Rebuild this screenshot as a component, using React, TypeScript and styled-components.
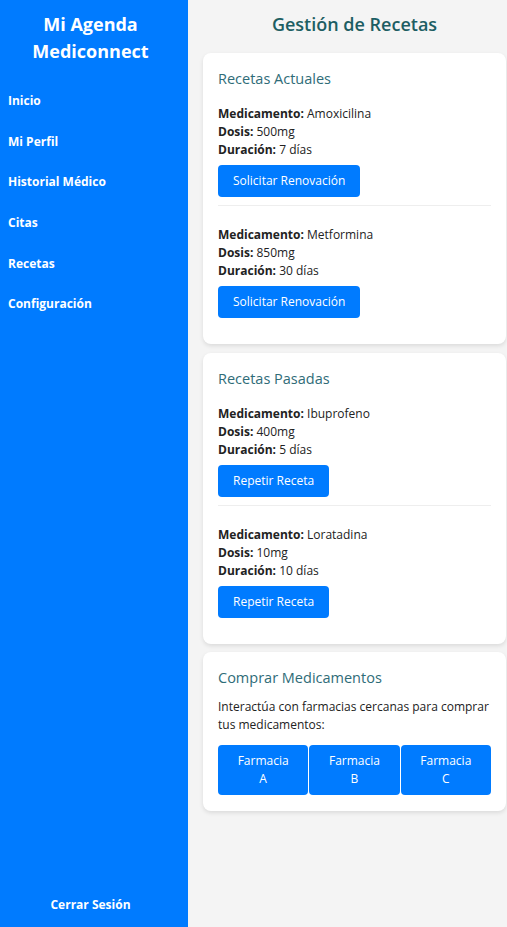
import React from "react";
import styled, { createGlobalStyle } from "styled-components";

const GlobalStyle = createGlobalStyle`
  html, body { margin: 0; padding: 0; }
  body {
    font-family: "Open Sans", "Noto Sans", "Liberation Sans", sans-serif;
    background: #f4f4f4;
    color: #222;
  }
  * { box-sizing: border-box; }
`;

const Layout = styled.div`
  display: flex;
  min-height: 100vh;
`;

const Sidebar = styled.aside`
  width: 188px;
  flex: 0 0 188px;
  height: 100vh;
  background: #007bff;
  color: #fff;
  display: flex;
  flex-direction: column;
  padding: 11px 15px 13px 8px;
`;

const Brand = styled.h2`
  margin: 0 0 16px;
  font-size: 18px;
  line-height: 27px;
  font-weight: 700;
  text-align: center;
`;

const Nav = styled.nav`
  display: flex;
  flex-direction: column;
`;

const NavLink = styled.a`
  display: block;
  color: #fff;
  text-decoration: none;
  font-size: 12px;
  font-weight: 700;
  line-height: 18px;
  padding: 11.3px 0;
`;

const Logout = styled.a`
  margin-top: auto;
  display: block;
  text-align: center;
  color: #fff;
  text-decoration: none;
  font-size: 12px;
  font-weight: 700;
  line-height: 18px;
`;

const Main = styled.main`
  flex: 1;
  padding: 11px 1px 20px 15px;
  display: flex;
  flex-direction: column;
  gap: 8.5px;
`;

const PageTitle = styled.h1`
  margin: 0 0 7.5px;
  text-align: center;
  font-size: 18px;
  line-height: 26px;
  font-weight: 600;
  color: #1d5e63;
`;

const Card = styled.section<{ $padBottom?: number }>`
  background: #fff;
  border-radius: 8px;
  box-shadow: 0 2px 4px rgba(0, 0, 0, 0.1);
  padding: 16px 15px ${(p) => p.$padBottom ?? 15}px;
`;

const CardTitle = styled.h3`
  margin: 0 0 10px;
  font-size: 14.5px;
  line-height: 20px;
  font-weight: 400;
  color: #2f6c78;
`;

const Item = styled.div`
  padding: 6px 0 8px;
  border-bottom: 1px solid #eee;
  & + & {
    margin-top: 14px;
  }
  &:last-child {
    border-bottom: none;
    padding-bottom: 11px;
  }
`;

const Field = styled.p`
  margin: 0;
  font-size: 12px;
  line-height: 18px;
  color: #222;
  b {
    font-weight: 700;
  }
`;

const Button = styled.button`
  margin-top: 6px;
  background: #007bff;
  color: #fff;
  border: none;
  border-radius: 4px;
  font-family: inherit;
  font-size: 12px;
  line-height: 18px;
  padding: 7px 15px;
  cursor: pointer;
`;

const Text = styled.p`
  margin: 0;
  font-size: 12px;
  line-height: 18px;
  color: #222;
`;

const PharmacyRow = styled.div`
  display: flex;
  gap: 1px;
  margin-top: 11px;
`;

const PharmacyButton = styled(Button)`
  margin-top: 0;
  flex: 1;
  padding: 7px 18px;
`;

type Recipe = { med: string; dose: string; duration: string };

const current: Recipe[] = [
  { med: "Amoxicilina", dose: "500mg", duration: "7 días" },
  { med: "Metformina", dose: "850mg", duration: "30 días" },
];
const past: Recipe[] = [
  { med: "Ibuprofeno", dose: "400mg", duration: "5 días" },
  { med: "Loratadina", dose: "10mg", duration: "10 días" },
];

function RecipeCard({ title, items, action }: { title: string; items: Recipe[]; action: string }) {
  return (
    <Card>
      <CardTitle>{title}</CardTitle>
      {items.map((r) => (
        <Item key={r.med}>
          <Field>
            <b>Medicamento:</b> {r.med}
          </Field>
          <Field>
            <b>Dosis:</b> {r.dose}
          </Field>
          <Field>
            <b>Duración:</b> {r.duration}
          </Field>
          <Button>{action}</Button>
        </Item>
      ))}
    </Card>
  );
}

export default function App() {
  return (
    <>
      <GlobalStyle />
      <Layout>
        <Sidebar>
          <Brand>Mi Agenda Mediconnect</Brand>
          <Nav>
            {["Inicio", "Mi Perfil", "Historial Médico", "Citas", "Recetas", "Configuración"].map((l) => (
              <NavLink key={l} href="#">
                {l}
              </NavLink>
            ))}
          </Nav>
          <Logout href="#">Cerrar Sesión</Logout>
        </Sidebar>
        <Main>
          <PageTitle>Gestión de Recetas</PageTitle>
          <RecipeCard title="Recetas Actuales" items={current} action="Solicitar Renovación" />
          <RecipeCard title="Recetas Pasadas" items={past} action="Repetir Receta" />
          <Card $padBottom={16}>
            <CardTitle>Comprar Medicamentos</CardTitle>
            <Text>Interactúa con farmacias cercanas para comprar tus medicamentos:</Text>
            <PharmacyRow>
              <PharmacyButton>Farmacia A</PharmacyButton>
              <PharmacyButton>Farmacia B</PharmacyButton>
              <PharmacyButton>Farmacia C</PharmacyButton>
            </PharmacyRow>
          </Card>
        </Main>
      </Layout>
    </>
  );
}
